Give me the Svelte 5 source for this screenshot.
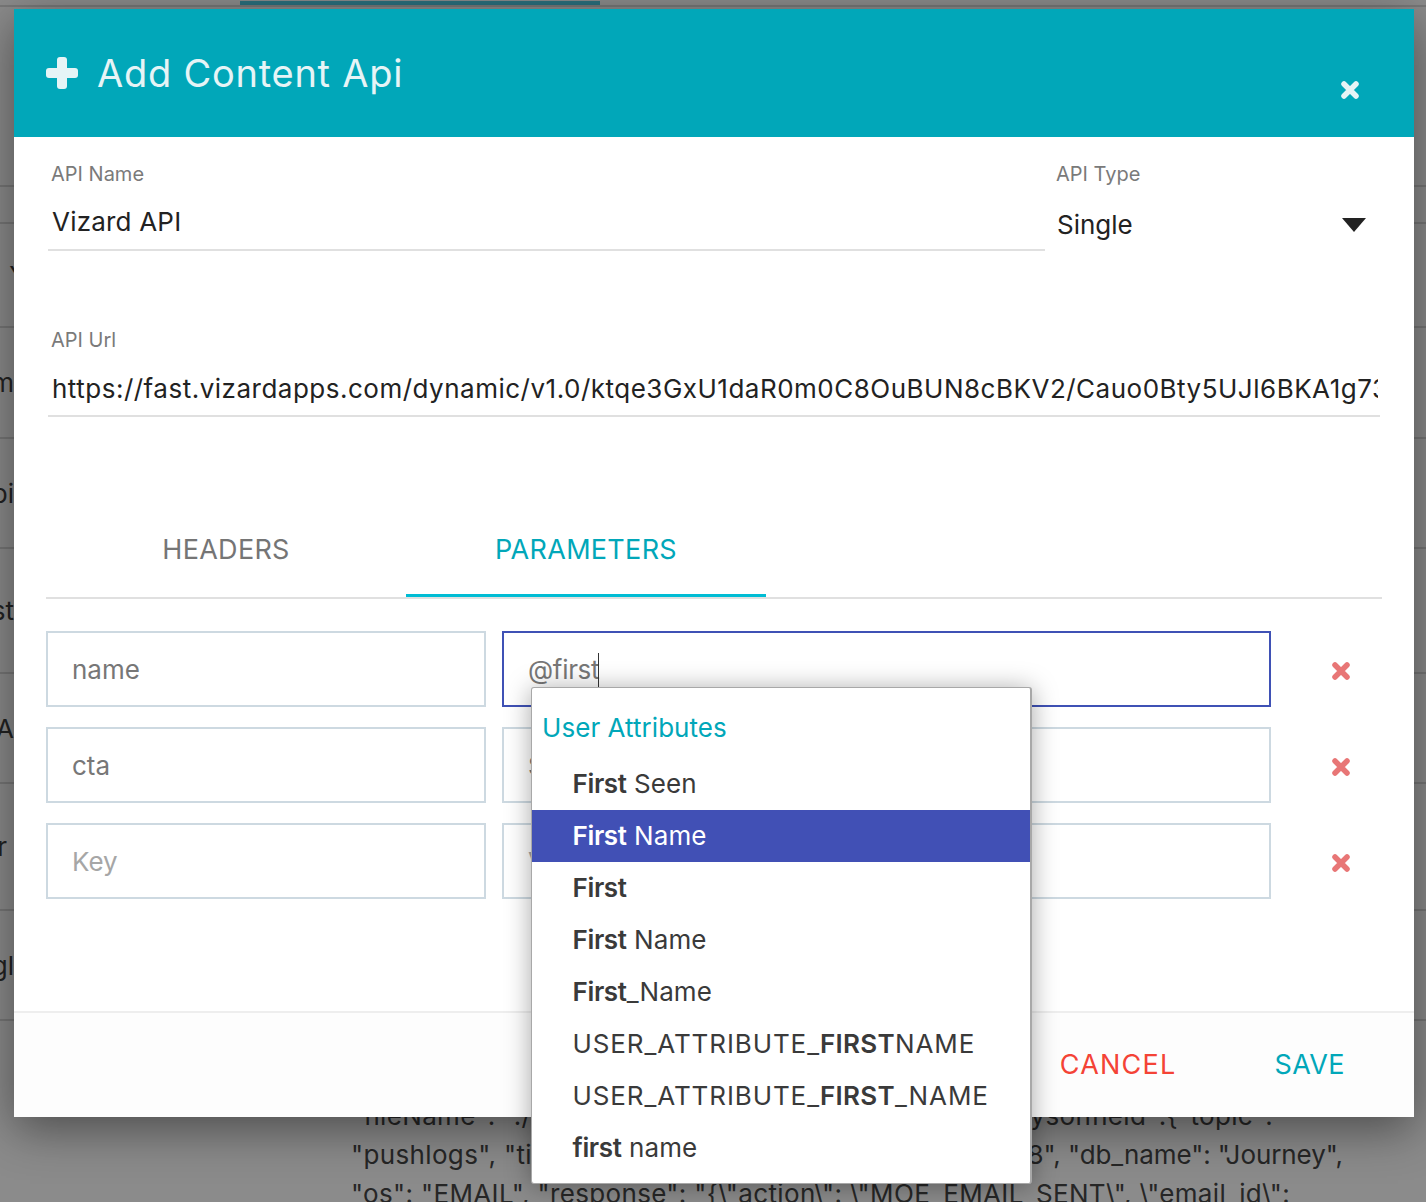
<script>
	// Rows of the page dimmed behind the modal: height, clipped label end, and where that label ends
	const backdropRows = [
		{ height: 180, text: '', end: 14 },
		{ height: 37, text: '', end: 14 },
		{ height: 104, text: 'Y', end: 27 },
		{ height: 111, text: 'm', end: 14 },
		{ height: 110, text: 'pi', end: 14 },
		{ height: 125, text: 'st', end: 14 },
		{ height: 110, text: 'A', end: 14 },
		{ height: 127, text: 'r', end: 7 },
		{ height: 110, text: 'gl', end: 14 }
	];

	const params = [
		{ key: 'name', value: '@first', active: true },
		{ key: 'cta', value: 'Sign up' },
		{ key: '', value: '' }
	];

	const suggestions = [
		{ bold: 'First', rest: ' Seen' },
		{ bold: 'First', rest: ' Name', selected: true },
		{ bold: 'First', rest: '' },
		{ bold: 'First', rest: ' Name' },
		{ bold: 'First', rest: '_Name' },
		{ before: 'USER_ATTRIBUTE_', bold: 'FIRST', rest: 'NAME' },
		{ before: 'USER_ATTRIBUTE_', bold: 'FIRST', rest: '_NAME' },
		{ bold: 'first', rest: ' name' }
	];
</script>

<div class="page">
	<div class="topbar"><span class="topbar-tab"></span></div>
	{#each backdropRows as row}
		<div class="bg-row" style="height: {row.height}px"><span class="bg-label" style="width: {row.end}px">{row.text}</span></div>
	{/each}
	<div class="bg-json">
		<div class="bg-line first-line"><span>"fileName": "./c</span><span>eysonfield":{'{'}"topic":</span></div>
		<div class="bg-line"><span>"pushlogs", "tin</span><span class="tight">8", "db_name": "Journey",</span></div>
		<div class="bg-line"><span>"os": "EMAIL", "response": "{'{'}\"action\": \"MOE_EMAIL_SENT\", \"email_id\":</span></div>
	</div>

	<div class="modal">
		<header class="modal-header">
			<svg class="plus" viewBox="0 0 32 32" aria-hidden="true">
				<rect x="11" y="0" width="10" height="32" rx="3" />
				<rect x="0" y="11" width="32" height="10" rx="3" />
			</svg>
			<h2>Add Content Api</h2>
			<svg class="close" viewBox="0 0 20 20" aria-hidden="true"><path d="M4 4l12 12M16 4L4 16" /></svg>
		</header>

		<div class="top-fields">
			<div class="field name-field">
				<label for="api-name">API Name</label>
				<input id="api-name" class="line-input" value="Vizard API" />
			</div>
			<div class="field type-field">
				<span class="label">API Type</span>
				<div class="select">
					<span>Single</span>
					<span class="arrow"></span>
				</div>
			</div>
		</div>

		<div class="field url-field">
			<label for="api-url">API Url</label>
			<input id="api-url" class="line-input" value="https://fast.vizardapps.com/dynamic/v1.0/ktqe3GxU1daR0m0C8OuBUN8cBKV2/Cauo0Bty5UJl6BKA1g7301" />
		</div>

		<div class="tabs">
			<div class="tab">HEADERS</div>
			<div class="tab active">PARAMETERS</div>
		</div>

		<div class="param-grid">
			{#each params as p}
				<div class="box">
					{#if p.key}<span>{p.key}</span>{:else}<span class="placeholder">Key</span>{/if}
				</div>
				<div class="box" class:focused={p.active}>
					{#if p.active}
						<span class="typed">{p.value}</span><span class="caret"></span>
					{:else if p.value}
						<span>{p.value}</span>
					{:else}
						<span class="placeholder">Value</span>
					{/if}
				</div>
				<div class="remove">
					<svg viewBox="0 0 20 20" aria-hidden="true"><path d="M4 4l12 12M16 4L4 16" /></svg>
				</div>
			{/each}
		</div>

		<footer class="modal-footer">
			<button class="cancel">CANCEL</button>
			<button class="save">SAVE</button>
		</footer>

		<div class="dropdown">
			<div class="dropdown-title">User Attributes</div>
			{#each suggestions as s}
				<div class="option" class:selected={s.selected} class:caps={s.before}>{s.before ?? ''}<b>{s.bold}</b>{s.rest}</div>
			{/each}
		</div>
	</div>
</div>

<style>
	:global(body) {
		margin: 0;
		font-family: Inter, "Liberation Sans", sans-serif;
	}

	.page {
		position: relative;
		width: 1426px;
		height: 1202px;
		overflow: hidden;
		background: #8b8b8b;
		color: #222;
	}

	/* Dimmed page behind the modal */
	.topbar {
		height: 7px;
		box-sizing: border-box;
		border-bottom: 2px solid #787878;
		padding: 1px 0 0 240px;
	}

	.topbar-tab {
		display: block;
		width: 360px;
		height: 4px;
		background: #2b6f7d;
	}

	.bg-row {
		box-sizing: border-box;
		display: flex;
		align-items: center;
		border-bottom: 2px solid #777;
	}

	.bg-label {
		display: flex;
		justify-content: flex-end;
		overflow: hidden;
		white-space: nowrap;
		font-size: 26px;
	}

	.bg-json {
		padding: 75px 0 0 351px;
		width: 992px;
		font-size: 26px;
		line-height: 39px;
		letter-spacing: 0.35px;
		color: #262626;
	}

	.bg-line {
		display: flex;
		justify-content: space-between;
		white-space: nowrap;
	}

	.first-line {
		padding-right: 70px;
	}

	.tight {
		letter-spacing: -0.08px;
	}

	/* Modal */
	.modal {
		position: absolute;
		left: 14px;
		top: 9px;
		width: 1400px;
		height: 1108px;
		display: flex;
		flex-direction: column;
		background: #fff;
		box-shadow: 0 12px 45px rgba(0, 0, 0, 0.45);
	}

	.modal-header {
		height: 128px;
		flex: none;
		display: flex;
		align-items: center;
		padding-left: 32px;
		background: #01a7b9;
		color: #e6f4f6;
	}

	.modal-header h2 {
		margin: 0 0 0 19px;
		font-size: 38px;
		font-weight: 400;
		letter-spacing: 0.75px;
	}

	.plus {
		width: 32px;
		height: 32px;
		fill: #e6f4f6;
	}

	.close {
		width: 20px;
		height: 20px;
		margin: 34px 54px 0 auto;
	}

	.close path,
	.remove path {
		fill: none;
		stroke-width: 5.5;
		stroke-linecap: round;
	}

	.close path {
		stroke: #e6f4f6;
	}

	.top-fields {
		display: flex;
		padding: 25px 0 0 34px;
	}

	.field label,
	.label {
		display: block;
		padding-left: 3px;
		font-size: 20px;
		line-height: 24px;
		color: #7a7a7a;
	}

	.name-field {
		width: 997px;
	}

	.type-field {
		margin-left: 8px;
		width: 313px;
	}

	.line-input {
		display: block;
		box-sizing: border-box;
		width: 100%;
		height: 65px;
		padding: 18px 2px 9px 4px;
		border: 0;
		border-bottom: 2px solid #e0e0e0;
		outline: none;
		background: transparent;
		font: 400 26px/36px Inter, "Liberation Sans", sans-serif;
		color: #222;
	}

	.name-field .line-input {
		padding-top: 16px;
		letter-spacing: 0.2px;
	}

	.url-field .line-input {
		letter-spacing: 0.5px;
	}

	.select {
		display: flex;
		justify-content: space-between;
		align-items: center;
		padding: 21px 0 0 4px;
		font-size: 26px;
		line-height: 36px;
	}

	.arrow {
		width: 0;
		height: 0;
		border-left: 12px solid transparent;
		border-right: 12px solid transparent;
		border-top: 14px solid #222;
	}

	.url-field {
		margin: 77px 34px 0 34px;
	}

	.tabs {
		display: flex;
		margin: 85px 32px 0;
		border-bottom: 2px solid #e0e0e0;
	}

	.tab {
		box-sizing: border-box;
		width: 360px;
		height: 95px;
		padding-top: 2px;
		border-bottom: 3px solid transparent;
		display: flex;
		align-items: center;
		justify-content: center;
		font-size: 27px;
		letter-spacing: 0.3px;
		color: #757575;
	}

	.tab.active {
		border-bottom-color: #00bcd4;
		color: #01a7b9;
	}

	.param-grid {
		display: grid;
		grid-template-columns: 440px 769px 1fr;
		column-gap: 16px;
		row-gap: 20px;
		grid-auto-rows: 76px;
		margin: 32px 32px 0;
	}

	.box {
		box-sizing: border-box;
		display: flex;
		align-items: center;
		padding: 0 24px;
		border: 2px solid #cdd9e1;
		font-size: 26px;
		color: #777;
	}

	.box.focused {
		border-color: #3f51b5;
	}

	.placeholder {
		color: #a6a6a6;
	}

	.typed {
		letter-spacing: -0.3px;
	}

	.caret {
		width: 1px;
		height: 34px;
		margin: 2px 0 0 -1px;
		background: #333;
	}

	.remove {
		display: flex;
		align-items: center;
		padding: 4px 0 0 44px;
	}

	.remove svg {
		width: 20px;
		height: 20px;
	}

	.remove path {
		stroke: #e87676;
	}

	.modal-footer {
		margin-top: auto;
		height: 106px;
		box-sizing: border-box;
		display: flex;
		align-items: center;
		justify-content: flex-end;
		gap: 98px;
		padding: 0 69px 2px 0;
		border-top: 2px solid #eee;
		background: #fdfdfd;
	}

	.modal-footer button {
		padding: 0;
		border: 0;
		background: none;
		font: 400 27px Inter, "Liberation Sans", sans-serif;
	}

	.modal-footer .cancel {
		color: #f44336;
		letter-spacing: 1.2px;
	}

	.modal-footer .save {
		color: #01a7b9;
		letter-spacing: 0.4px;
	}

	/* Autocomplete popup, hangs past the modal's bottom edge */
	.dropdown {
		position: absolute;
		left: 517px;
		top: 678px;
		width: 501px;
		height: 497px;
		box-sizing: border-box;
		padding-bottom: 10px;
		background: #fff;
		border: 1px solid #a8a8a8;
		border-right-width: 2px;
		border-radius: 3px;
		box-shadow: 0 2px 26px rgba(0, 0, 0, 0.35);
	}

	.dropdown-title {
		height: 70px;
		box-sizing: border-box;
		padding: 22px 0 0 10px;
		font-size: 26px;
		line-height: 36px;
		letter-spacing: 0.05px;
		color: #01a7b9;
	}

	.option {
		height: 52px;
		line-height: 52px;
		padding-left: 40.5px;
		font-size: 26px;
		letter-spacing: 0.1px;
		color: #3a3a3a;
		white-space: nowrap;
	}

	.option b {
		font-weight: 600;
		letter-spacing: -0.35px;
	}

	.option.caps {
		letter-spacing: 0.9px;
	}

	.option.caps b {
		letter-spacing: 0.3px;
	}

	.option.selected {
		background: #4150b5;
		color: #fff;
	}
</style>
